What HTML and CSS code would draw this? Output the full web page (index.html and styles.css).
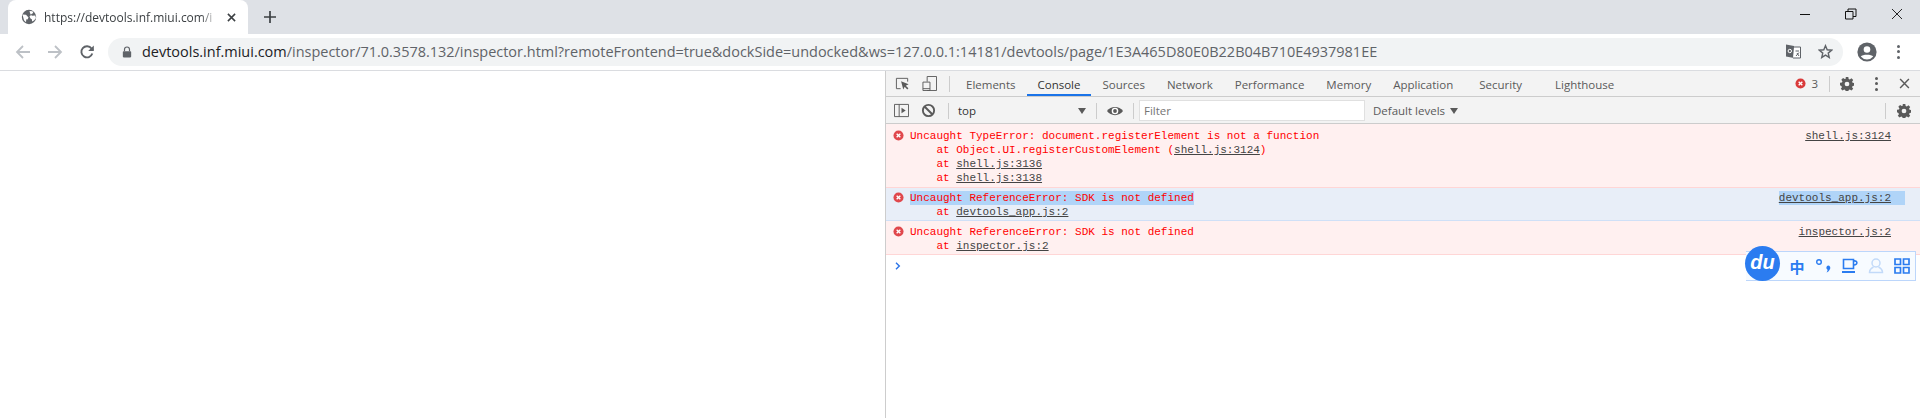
FILE: index.html
```html
<!DOCTYPE html>
<html lang="en">
<head>
<meta charset="utf-8">
<title>DevTools</title>
<link rel="stylesheet" href="styles.css">
</head>
<body>
<div class="strip">
  <div class="tab">
    <svg class="favicon" viewBox="0 0 16 16"><circle cx="8" cy="8" r="7.2" fill="#5f6368"/><path d="M1.500 5.500l3.500.3 2.500 2.700-1 2-1.200-.3-.3 3-2-2zM8.500 2l3 .2.800 1.800-2.300 1.200.7 1.600 3.500-.3.800 2.500-2 2.500-2 1v-2l-1.500-1-1-2 1.500-1.500-1-2z" fill="#fff"/></svg>
    <span class="tab-title">https://devtools.inf.miui.com/i</span>
    <svg class="tab-close" viewBox="0 0 10 10"><path d="M1 1l8 8M9 1L1 9" stroke="#3c4043" stroke-width="1.700" fill="none"/></svg>
  </div>
  <svg class="newtab" viewBox="0 0 12 12"><path d="M6 0v12M0 6h12" stroke="#3c4043" stroke-width="1.700" fill="none"/></svg>
  <div class="winctl">
    <svg class="winbtn" viewBox="0 0 12 12"><path d="M1 6.500h10" stroke="#111" fill="none"/></svg>
    <svg class="winbtn" viewBox="0 0 12 12"><path d="M.5 3.500h7.500v7.500H.5zM3 3.500V1h8v7.500H8" stroke="#111" fill="none"/></svg>
    <svg class="winbtn" viewBox="0 0 12 12"><path d="M1 1l10 10M11 1L1 11" stroke="#111" stroke-width=".9" fill="none"/></svg>
  </div>
</div>
<div class="toolbar">
  <svg class="nav" viewBox="0 0 16 16"><path d="M15 8H2M8 2L2 8l6 6" stroke="#bdc1c6" stroke-width="1.800" fill="none"/></svg>
  <svg class="nav" viewBox="0 0 16 16"><path d="M1 8h13M8 2l6 6-6 6" stroke="#bdc1c6" stroke-width="1.800" fill="none"/></svg>
  <svg class="nav" viewBox="0 0 16 16"><path d="M13.300 9.500a5.600 5.600 0 1 1-.8-5L14 6" stroke="#5f6368" stroke-width="1.900" fill="none"/><path d="M14.800 1.500v5.600H9.200z" fill="#5f6368"/></svg>
  <div class="omnibox">
    <svg class="lock" viewBox="0 0 12 14"><path d="M3 6V4a3 3 0 0 1 6 0v2" stroke="#5f6368" stroke-width="1.400" fill="none"/><rect x="1" y="6" width="10" height="7.500" rx="1" fill="#5f6368"/></svg>
    <span class="url"><span class="host">devtools.inf.miui.com</span>/inspector/71.0.3578.132/inspector.html?remoteFrontend=true&amp;dockSide=undocked&amp;ws=127.0.0.1:14181/devtools/page/1E3A465D80E0B22B04B710E4937981EE</span>
    <svg class="translate" viewBox="0 0 15 15"><path d="M0 .5l8 1.500v12l-8-1.500z" fill="#5f6368"/><path d="M8 3h6.500v11H7" stroke="#5f6368" fill="#fff"/><circle cx="3.800" cy="7" r="1.700" stroke="#fff" fill="none"/><path d="M9.500 7h3.500M11 9l2 3M13 8.500l-3 3.500" stroke="#5f6368" fill="none"/></svg>
    <svg class="star" viewBox="0 0 16 16"><path d="M8 1.800l1.800 4.400 4.700.4-3.600 3.100 1.100 4.600L8 11.800l-4 2.500 1.100-4.600L1.500 6.600l4.700-.4z" stroke="#5f6368" stroke-width="1.500" fill="none"/></svg>
  </div>
  <svg class="avatar" viewBox="0 0 20 20"><circle cx="10" cy="10" r="9.600" fill="#5f6368"/><circle cx="10" cy="7.500" r="3.300" fill="#fff"/><path d="M3.800 14.500c1.500-2.500 10.900-2.500 12.400 0a8 8 0 0 1-12.400 0z" fill="#fff"/></svg>
  <div class="menu-dots"><i></i><i></i><i></i></div>
</div>
<div class="content">
  <div class="page"></div>
  <div class="devtools">
    <div class="dt-tabs">
      <svg class="dt-icon" viewBox="0 0 16 16"><path d="M6 13.500H1.500v-11h12V6" stroke="#5a5a5a" fill="none"/><path d="M6.500 5.500l2.300 9 1.500-3 2.800 2.800 1.200-1.200-2.800-2.800 3-1.500z" fill="#5a5a5a"/></svg>
      <svg class="dt-icon" viewBox="0 0 16 16"><path d="M5.500 6V.5h10v15H5.500" stroke="#5a5a5a" fill="none"/><path d="M1 6.500h7.500v9H1zM1 13.500h7.500" stroke="#5a5a5a" fill="none"/></svg>
      <span class="sep"></span>
      <span class="dt-tab first-tab">Elements</span>
      <span class="dt-tab active">Console</span>
      <span class="dt-tab">Sources</span>
      <span class="dt-tab">Network</span>
      <span class="dt-tab">Performance</span>
      <span class="dt-tab">Memory</span>
      <span class="dt-tab">Application</span>
      <span class="dt-tab security">Security</span>
      <span class="dt-tab lighthouse">Lighthouse</span>
      <span class="dt-right">
        <svg class="err-badge" viewBox="0 0 12 12"><circle cx="6" cy="6" r="5.500" fill="#d93a3a"/><path d="M4 4l4 4M8 4l-4 4" stroke="#fff" stroke-width="1.500"/></svg>
        <span class="err-count">3</span>
        <span class="sep"></span>
        <svg class="gear" viewBox="0 0 16 16"><use href="#gear-shape"/></svg>
        <span class="kebab"><i></i><i></i><i></i></span>
        <svg class="dt-x" viewBox="0 0 10 10"><path d="M1 1l8 8M9 1L1 9" stroke="#5a5a5a" stroke-width="1.300" fill="none"/></svg>
      </span>
    </div>
    <div class="dt-bar">
      <svg class="dt-icon" viewBox="0 0 16 16"><path d="M.5 1.500h15v13H.5zM5.500 1.500v13" stroke="#5a5a5a" fill="none"/><path d="M8 5l4.500 3L8 11z" fill="#5a5a5a"/></svg>
      <svg class="dt-icon" viewBox="0 0 16 16"><circle cx="8" cy="8" r="6" stroke="#5a5a5a" stroke-width="2" fill="none"/><path d="M4 4l8 8" stroke="#5a5a5a" stroke-width="2"/></svg>
      <span class="sep"></span>
      <span class="ctx">top</span>
      <span class="tri"></span>
      <span class="sep"></span>
      <svg class="eye" viewBox="0 0 16 16"><path d="M0 8c3.500-5.500 12.500-5.500 16 0-3.500 5.500-12.500 5.500-16 0z" fill="#5a5a5a"/><circle cx="8" cy="8" r="3.300" fill="#fff"/><circle cx="8" cy="8" r="1.900" fill="#5a5a5a"/></svg>
      <span class="sep"></span>
      <span class="filter">Filter</span>
      <span class="levels">Default levels</span>
      <span class="tri small"></span>
      <span class="dt-right">
        <span class="sep"></span>
        <svg class="gear" viewBox="0 0 16 16"><path id="gear-shape" fill="#5a5a5a" fill-rule="evenodd" d="M6.500 0h3l.4 2.200 1.300.6 1.900-1.300 2 2-1.300 1.900.6 1.300 2.200.4v2.800l-2.200.4-.6 1.300 1.300 1.900-2 2-1.900-1.300-1.300.6-.4 2.200h-3l-.4-2.200-1.300-.6-1.900 1.300-2-2 1.300-1.900-.6-1.300L0 9.500V6.700l2.200-.4.6-1.300L1.500 3.100l2-2 1.900 1.300 1.300-.6zM8 5.300a2.700 2.700 0 1 0 0 5.400 2.700 2.700 0 0 0 0-5.400z"/></svg>
      </span>
    </div>
    <div class="console">
      <div class="msg first">
        <svg class="msg-icon" viewBox="0 0 12 12"><circle cx="6" cy="6" r="5.500" fill="#e0474c"/><path d="M4 4l4 4M8 4l-4 4" stroke="#fff" stroke-width="1.500"/></svg>
        <div class="msg-body">
          <div class="line">Uncaught TypeError: document.registerElement is not a function</div>
          <div class="line indent">at Object.UI.registerCustomElement (<u>shell.js:3124</u>)</div>
          <div class="line indent">at <u>shell.js:3136</u></div>
          <div class="line indent">at <u>shell.js:3138</u></div>
        </div>
        <u class="src">shell.js:3124</u>
      </div>
      <div class="msg selected">
        <svg class="msg-icon" viewBox="0 0 12 12"><circle cx="6" cy="6" r="5.500" fill="#e0474c"/><path d="M4 4l4 4M8 4l-4 4" stroke="#fff" stroke-width="1.500"/></svg>
        <div class="msg-body">
          <div class="line"><span class="sel">Uncaught ReferenceError: SDK is not defined</span></div>
          <div class="line indent">at <u>devtools_app.js:2</u></div>
        </div>
        <span class="sel src-wrap"><u>devtools_app.js:2</u></span>
      </div>
      <div class="msg">
        <svg class="msg-icon" viewBox="0 0 12 12"><circle cx="6" cy="6" r="5.500" fill="#e0474c"/><path d="M4 4l4 4M8 4l-4 4" stroke="#fff" stroke-width="1.500"/></svg>
        <div class="msg-body">
          <div class="line">Uncaught ReferenceError: SDK is not defined</div>
          <div class="line indent">at <u>inspector.js:2</u></div>
        </div>
        <u class="src">inspector.js:2</u>
      </div>
      <svg class="prompt" viewBox="0 0 6 8"><path d="M1 .8L4.300 4 1 7.200" stroke="#2a73e8" stroke-width="1.400" fill="none"/></svg>
    </div>
    <div class="ime">
      <span class="ime-logo">du</span>
      <span class="ime-cn">中</span>
      <svg class="ime-icon" viewBox="0 0 16 16"><circle cx="3" cy="4" r="2.300" stroke="#2b7cf0" stroke-width="1.400" fill="none"/><path d="M12 7.500a2.300 2.300 0 0 1 2 3.500c-.5 1.500-2 3-3.500 3.500.7-1 1.200-2 1-2.800A2.300 2.300 0 0 1 12 7.500z" fill="#2b7cf0"/></svg>
      <svg class="ime-icon" viewBox="0 0 16 16"><path d="M1.500 1.500h10v9h-10zM11.500 3c4.500-1 4.500 4.500 0 4" stroke="#2b7cf0" stroke-width="1.600" fill="none"/><path d="M0 14h13" stroke="#2b7cf0" stroke-width="2"/></svg>
      <svg class="ime-icon" viewBox="0 0 16 16"><circle cx="8" cy="5" r="4" stroke="#c2daf9" stroke-width="1.500" fill="none"/><path d="M5.500 9c-2 1-4 2.500-4 5.500h13c0-3-2-4.500-4-5.500" stroke="#c2daf9" stroke-width="1.500" fill="none"/></svg>
      <svg class="ime-icon" viewBox="0 0 16 16"><path d="M1 1h5.500v5.500H1zM9.500 1H15v5.500H9.500zM1 9.500h5.500V15H1zM9.500 9.500H15V15H9.500z" stroke="#2b7cf0" stroke-width="1.700" fill="none"/></svg>
    </div>
  </div>
</div>
</body>
</html>
```
FILE: styles.css
```css
* { box-sizing: border-box; }
html, body { margin: 0; height: 100%; overflow: hidden; background: #fff; }
body { display: flex; flex-direction: column; font-family: "Open Sans", "Liberation Sans", sans-serif; }

.strip { height: 34px; flex: none; background: #dee1e6; display: flex; align-items: flex-end; padding-left: 8px; }
.tab { width: 240px; height: 34px; background: #fff; border-radius: 8px 8px 0 0; display: flex; align-items: center; padding: 0 12px 0 13px; }
.favicon { width: 16px; height: 16px; flex: none; }
.tab-title { margin-left: 7px; width: 175px; overflow: hidden; white-space: nowrap; font-size: 12px; color: #3c4043; -webkit-mask-image: linear-gradient(90deg, #000 90%, transparent); mask-image: linear-gradient(90deg, #000 90%, transparent); }
.tab-close { width: 9px; height: 9px; margin-left: 9px; flex: none; }
.newtab { width: 12px; height: 12px; margin: 0 0 11px 16px; flex: none; }
.winctl { margin-left: auto; align-self: flex-start; display: flex; gap: 34px; padding: 8px 17px 0 0; }
.winbtn { width: 12px; height: 12px; display: block; }

.toolbar { height: 37px; flex: none; background: #fff; border-bottom: 1px solid #dadce0; display: flex; align-items: center; padding: 0 0 1px 15px; }
.nav { width: 16px; height: 16px; margin-right: 16px; flex: none; }
.omnibox { width: 1735px; margin-left: -3px; height: 28px; flex: none; border-radius: 14px; background: #f1f3f4; display: flex; align-items: center; padding: 0 10px 0 14px; }
.lock { width: 10px; height: 12px; flex: none; }
.url { margin-left: 10px; font-size: 14.47px; white-space: nowrap; color: #5f6368; }
.host { color: #202124; }
.translate { width: 15px; height: 15px; margin-left: auto; }
.star { width: 15px; height: 15px; margin-left: 17px; }
.avatar { width: 20px; height: 20px; margin-left: 14px; flex: none; }
.menu-dots { margin-left: 20px; display: flex; flex-direction: column; gap: 2.500px; }
.menu-dots i { width: 3px; height: 3px; border-radius: 50%; background: #5f6368; display: block; }

.content { flex: 1; display: flex; min-height: 0; }
.page { width: 885px; flex: none; background: #fff; }
.devtools { position: relative; flex: 1; border-left: 1px solid #cdcdcd; display: flex; flex-direction: column; font-size: 11px; color: #333; }
.dt-tabs { height: 26px; flex: none; background: #f3f3f3; border-bottom: 1px solid #ccc; display: flex; align-items: center; padding-left: 9px; }
.dt-bar { height: 27px; flex: none; background: #f3f3f3; border-bottom: 1px solid #ccc; display: flex; align-items: center; padding: 1px 0 0 8px; }
.dt-icon { width: 15px; height: 15px; flex: none; margin-right: 12px; }
.sep { width: 1px; height: 16px; background: #ccc; flex: none; }
.dt-tabs > .sep { margin-right: 5px; }
.dt-tab { height: 25px; line-height: 27px; padding: 0 11px; font-size: 11.500px; color: #5a5a5a; white-space: nowrap; }
.dt-tab.active { color: #333; box-shadow: inset 0 -2px 0 #1a73e8; }
.dt-tab.security { margin-left: 4px; }
.dt-tab.lighthouse { margin-left: 11px; }
.dt-right { margin-left: auto; display: flex; align-items: center; }
.err-badge { width: 11px; height: 11px; }
.err-count { margin: 0 11px 0 5px; font-size: 11.500px; color: #5a5a5a; }
.gear { width: 14px; height: 14px; margin-left: 10px; }
.kebab { margin-left: 21px; display: flex; flex-direction: column; gap: 2.500px; }
.kebab i { width: 3px; height: 3px; background: #5a5a5a; border-radius: 50%; display: block; }
.dt-x { width: 11px; height: 11px; margin: 0 10px 0 21px; }
.ctx { width: 120px; margin-left: 9px; font-size: 11.500px; }
.tri { width: 0; height: 0; border: 4px solid transparent; border-top: 6px solid #5a5a5a; border-bottom: 0; margin-right: 10px; flex: none; }
.eye { width: 16px; height: 16px; margin: 0 10px; flex: none; }
.filter { width: 226px; height: 21px; margin-left: 5px; background: #fff; border: 1px solid #e0e0e0; padding-left: 4px; line-height: 19px; font-size: 11.500px; color: #757575; }
.levels { margin-left: 8px; font-size: 11.500px; color: #5a5a5a; }
.tri.small { margin-left: 5px; margin-right: 0; }
.dt-bar .gear { margin: 0 9px 0 11px; }

.console { flex: 1; font: 11px/14px "Liberation Mono", monospace; color: #f00; background: #fff; }
.msg { display: flex; align-items: flex-start; background: #fff0f0; border-bottom: 1px solid #ffd6d6; padding: 4px 29px 1px 7px; }
.msg.first { padding-top: 5px; padding-bottom: 2px; }
.msg-icon { width: 11px; height: 11px; margin: 1px 6px 0 0; flex: none; }
.line { white-space: nowrap; height: 14px; }
.line.indent { padding-left: 26.400px; }
.msg u { color: #444; }
.src { display: block; margin-left: auto; }
.msg.selected { background: #e8eef8; border-bottom-color: #cfe0f7; padding-top: 3px; }
.sel { background: #b0d4f8; display: inline-block; height: 14px; }
.src-wrap { margin-left: auto; padding-right: 14px; margin-right: -14px; }
.prompt { display: block; width: 6px; height: 8px; margin: 7px 0 0 9px; }

.ime { position: absolute; right: 4px; top: 180px; width: 170px; height: 30px; display: flex; align-items: center; background: #f7fbff; border: 1px solid #bcd6fb; border-left: 0; padding-left: 42px; }
.ime-logo { position: absolute; left: -1px; top: -6px; width: 35px; height: 35px; border-radius: 50%; background: #2b7cf0; color: #fff; font: italic bold 20px/33px "Liberation Sans", sans-serif; text-align: center; }
.ime-cn { width: 18px; font: bold 15px "Noto Sans CJK SC", sans-serif; color: #2b7cf0; text-align: center; }
.ime-icon { width: 16px; height: 16px; margin-left: 10px; flex: none; }
```
